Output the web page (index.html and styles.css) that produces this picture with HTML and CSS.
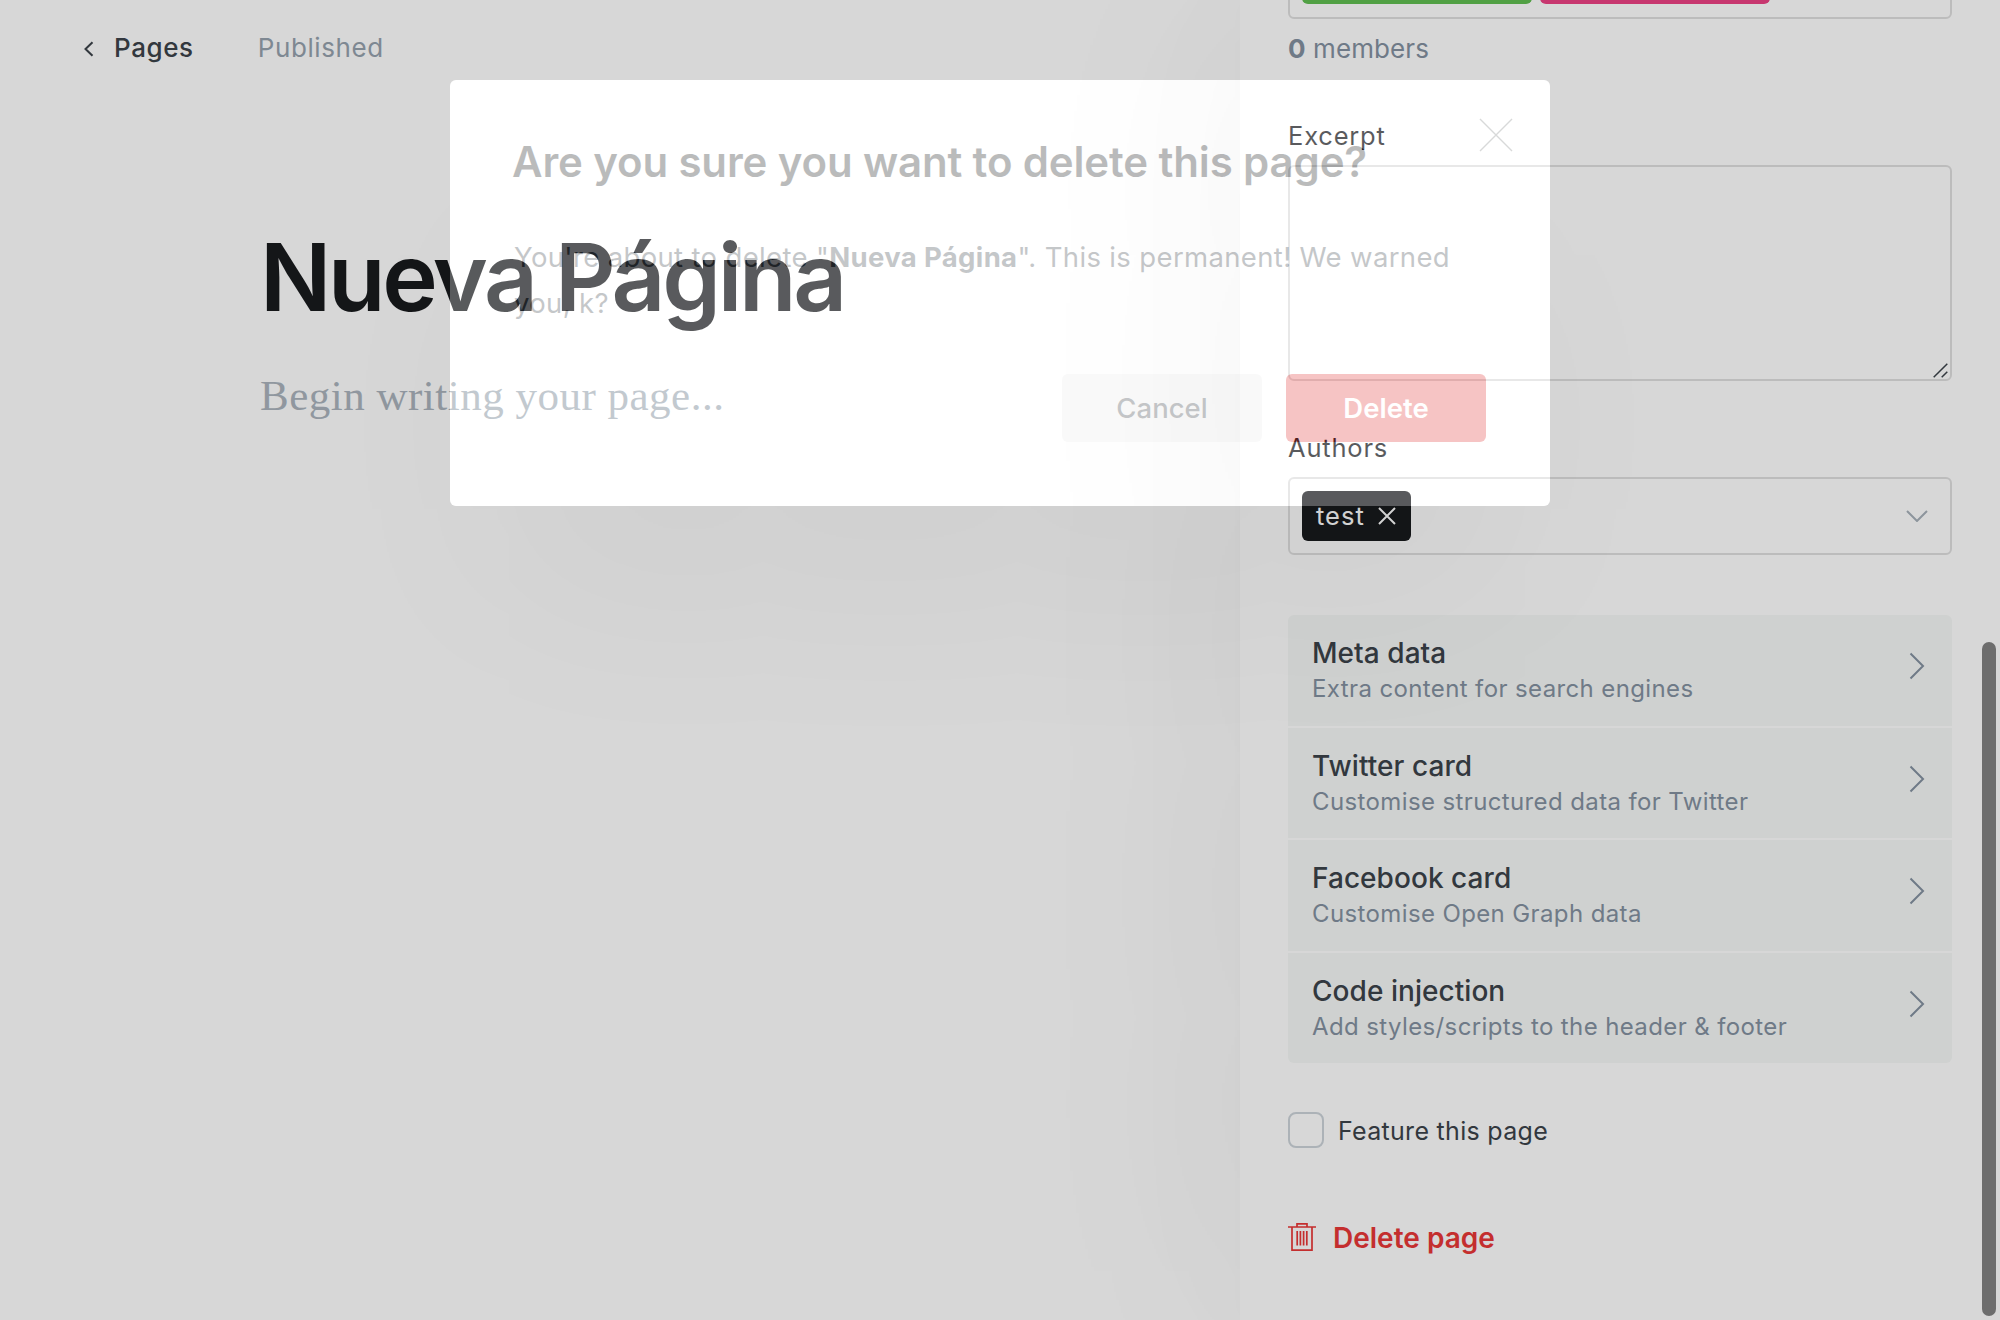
FILE: index.html
```html
<!DOCTYPE html>
<html lang="en">
<head>
<meta charset="utf-8">
<title>Nueva Página</title>
<link rel="stylesheet" href="styles.css">
</head>
<body>
<div class="app">
  <main class="editor">
    <header class="topbar">
      <a class="back"><svg class="back-icon" viewBox="0 0 10 16"><path d="M8.500 1.200 1.500 8l7 6.800"/></svg><span class="back-label">Pages</span></a>
      <span class="status">Published</span>
    </header>
    <article class="draft">
      <h1 class="draft-title">Nueva Página</h1>
      <p class="draft-body">Begin writing your page...</p>
    </article>
  </main>
  <aside class="panel">
    <div class="field tags"><span class="tag green"></span><span class="tag pink"></span></div>
    <p class="members"><b>0</b> members</p>
    <label class="label excerpt">Excerpt</label>
    <div class="textarea"><svg class="grip" viewBox="0 0 15 15"><path d="M.7 14.300 14.300.7M8.700 14.300l5.600-5.600"/></svg></div>
    <label class="label authors">Authors</label>
    <div class="field select">
      <span class="token"><span class="token-text">test</span><svg class="token-x" viewBox="0 0 18 18"><path d="m1 1 16 16M17 1 1 17"/></svg></span>
      <svg class="caret" viewBox="0 0 22 12"><path d="m1 1 10 10L21 1"/></svg>
    </div>
    <nav class="list">
      <a class="row"><span class="row-text"><span class="row-title">Meta data</span><span class="row-sub">Extra content for search engines</span></span><svg class="arrow" viewBox="0 0 16 28"><path d="m1.500 1.500 12.500 12.500-12.500 12.500"/></svg></a>
      <a class="row"><span class="row-text"><span class="row-title">Twitter card</span><span class="row-sub">Customise structured data for Twitter</span></span><svg class="arrow" viewBox="0 0 16 28"><path d="m1.500 1.500 12.500 12.500-12.500 12.500"/></svg></a>
      <a class="row"><span class="row-text"><span class="row-title">Facebook card</span><span class="row-sub">Customise Open Graph data</span></span><svg class="arrow" viewBox="0 0 16 28"><path d="m1.500 1.500 12.500 12.500-12.500 12.500"/></svg></a>
      <a class="row"><span class="row-text"><span class="row-title">Code injection</span><span class="row-sub">Add styles/scripts to the header &amp; footer</span></span><svg class="arrow" viewBox="0 0 16 28"><path d="m1.500 1.500 12.500 12.500-12.500 12.500"/></svg></a>
    </nav>
    <div class="feature"><span class="checkbox"></span><span class="feature-label">Feature this page</span></div>
    <div class="remove"><svg class="trash" viewBox="0 0 28 28"><path d="M0 4h28M4 4v23.200h20V4M9 4V.8h10V4M9.200 8v14.500M12.400 8v14.500M15.600 8v14.500M18.800 8v14.500"/></svg><span>Delete page</span></div>
  </aside>
  <div class="modal-frame">
    <section class="modal">
      <h2 class="modal-title">Are you sure you want to delete this page?</h2>
      <p class="modal-text">You're about to delete "<b>Nueva Página</b>". This is permanent! We warned<br>you, k?</p>
      <div class="actions"><span class="btn">Cancel</span><span class="btn danger">Delete</span></div>
      <svg class="close" viewBox="0 0 34 34"><path d="m1 1 32 32M33 1 1 33"/></svg>
    </section>
  </div>
  <div class="scrollbar"></div>
</div>
</body>
</html>
```
FILE: styles.css
```css
* { box-sizing: border-box; margin: 0; padding: 0; }
body { width: 2000px; height: 1320px; overflow: hidden; background: #fff; font-family: Inter, sans-serif; color: #394047; }
svg { display: block; flex: none; fill: none; stroke: currentColor; stroke-width: 2; }
.app { position: relative; display: flex; width: 2000px; height: 1320px; overflow: hidden; }

.editor { flex: 1; }
.topbar { display: flex; align-items: center; height: 30px; margin: 33px 0 0 84px; font-size: 26px; line-height: 30px; letter-spacing: .6px; }
.back { display: flex; align-items: center; font-weight: 500; }
.back-icon { width: 10px; height: 16px; margin: 1px 20px 0 0; }
.status { margin-left: 64px; color: #95a1ad; }
.draft { margin: 159px 0 0 260px; }
.draft-title { font-size: 94px; line-height: 110px; font-weight: 600; letter-spacing: -3.3px; color: #15171a; white-space: nowrap; }
.draft-body { margin-top: 39px; font: 43px/50px "Liberation Serif", serif; letter-spacing: .5px; color: #aab3bc; }

.panel { position: relative; width: 760px; padding: 0 48px; background: #fff; box-shadow: 0 0 340px rgba(0, 0, 0, .05), 0 0 170px rgba(0, 0, 0, .025), 0 0 20px rgba(0, 0, 0, .01); }
.field { display: flex; height: 78px; padding: 12px; border: 2px solid #dfdfdf; border-radius: 6px; }
.tags { gap: 8px; margin-top: -59px; }
.tag { width: 230px; height: 49px; border-radius: 6px; }
.green { background: #5ebd4f; }
.pink { background: #ec3f83; }
.members { margin-top: 15px; font-size: 26px; line-height: 30px; letter-spacing: .1px; color: #82909f; }
.label { display: block; font-size: 25.5px; line-height: 30px; letter-spacing: .8px; color: #15171a; }
.excerpt { margin-top: 57px; }
.textarea { display: flex; justify-content: flex-end; align-items: flex-end; height: 216px; margin-top: 14px; padding: 1px 2px; border: 2px solid #dfdfdf; border-radius: 6px; }
.grip { width: 15px; height: 15px; stroke-width: 1.5; }
.authors { margin-top: 52px; }
.select { justify-content: space-between; align-items: center; margin-top: 14px; padding-right: 22px; }
.token { display: flex; align-items: center; justify-content: space-between; width: 109px; height: 50px; padding: 0 15px 0 14px; border-radius: 6px; background: #15171a; color: #fff; font-size: 25.5px; letter-spacing: 1px; }
.token-text { padding-bottom: 2px; }
.token-x { width: 18px; height: 18px; }
.caret { width: 22px; height: 12px; color: #a6b0b9; }
.list { display: grid; grid-template-rows: repeat(4, 1fr); gap: 2px; height: 448px; margin-top: 60px; border-radius: 6px; overflow: hidden; }
.row { display: flex; justify-content: space-between; padding: 21px 27px 0 24px; background: #f6f8f7; }
.row-text { display: flex; flex-direction: column; gap: 2px; }
.row-title { font-size: 28px; line-height: 34px; font-weight: 500; letter-spacing: .05px; }
.row-sub { font-size: 24px; line-height: 34px; letter-spacing: .38px; color: #82909f; }
.arrow { width: 16px; height: 28px; margin-top: 16px; color: #82909f; }
.feature { display: flex; align-items: center; height: 36px; margin-top: 49px; font-size: 25px; letter-spacing: .3px; }
.feature-label { padding-top: 2px; }
.checkbox { width: 36px; height: 36px; margin-right: 14px; border: 2px solid #ccd3d9; border-radius: 8px; }
.remove { display: flex; align-items: center; height: 36px; margin-top: 72px; font-size: 28px; font-weight: 600; color: #e93434; }
.trash { width: 28px; height: 28px; margin: -2px 17px 0 0; stroke-width: 1.7; }

/* The ring dims everything outside the dialog; the dialog itself is mid-fade. */
.modal-frame { position: absolute; left: 450px; top: 80px; width: 1100px; height: 426px; border-radius: 6px; box-shadow: 0 130px 210px -35px rgba(0, 0, 0, .034), 0 0 0 2000px rgba(18, 18, 18, .167); }
.modal { position: relative; height: 426px; padding: 57px 64px 0 63px; border-radius: 6px; background: #fff; opacity: .29; }
.modal-title { margin-left: -1px; font-size: 42px; line-height: 50px; font-weight: 600; letter-spacing: -.14px; color: #15171a; white-space: nowrap; }
.modal-text { margin: 47px 0 0 1px; font-size: 27.5px; line-height: 46px; letter-spacing: .35px; white-space: nowrap; }
.actions { display: flex; justify-content: flex-end; gap: 24px; margin-top: 48px; }
.btn { display: flex; align-items: center; justify-content: center; width: 200px; height: 68px; border-radius: 6px; background: #ededed; font-size: 27.5px; font-weight: 500; }
.danger { background: #e33737; color: #fff; font-weight: 600; }
.close { position: absolute; top: 38px; right: 37px; width: 34px; height: 34px; stroke-width: 1.4; color: #7c8080; }
.scrollbar { position: absolute; right: 4px; top: 642px; width: 14px; height: 674px; border-radius: 7px; background: #6d6d6d; }
```
